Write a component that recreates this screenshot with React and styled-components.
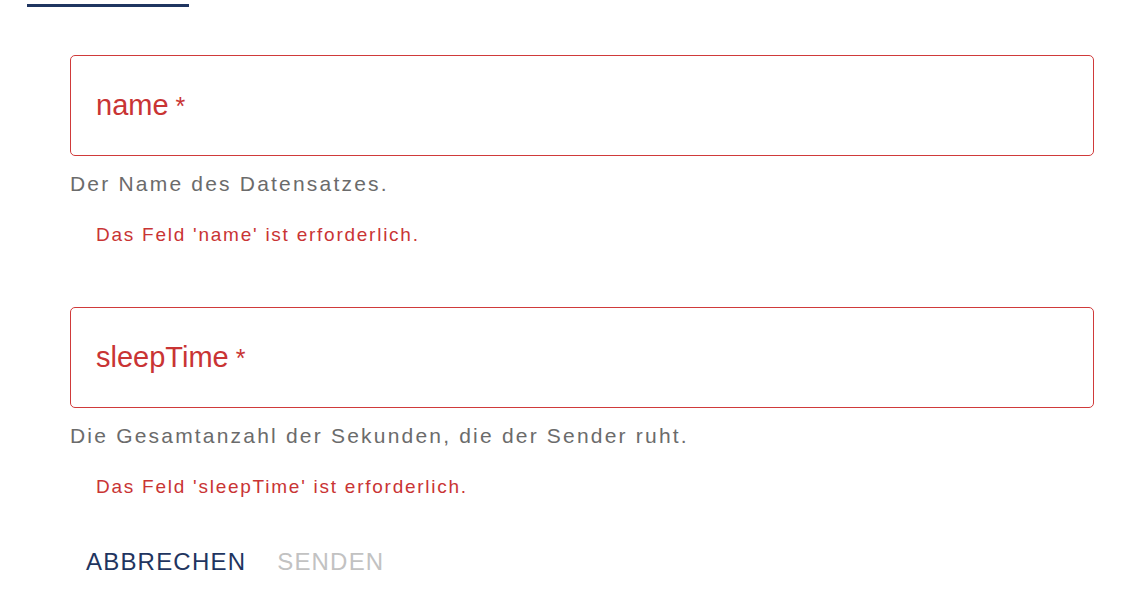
import React from "react";
import styled, { createGlobalStyle } from "styled-components";

const GlobalStyle = createGlobalStyle`
  body {
    margin: 0;
    background: #ffffff;
    font-family: "Liberation Sans", Arial, sans-serif;
  }
`;

const Page = styled.div`
  width: 1134px;
  height: 609px;
  overflow: hidden;
`;

const TabIndicator = styled.div`
  margin-left: 27px;
  margin-top: 4px;
  width: 162px;
  height: 3px;
  background: #1f3560;
`;

const Form = styled.form`
  padding: 48px 40px 0 70px;
  display: flex;
  flex-direction: column;
`;

const Field = styled.div`
  display: flex;
  flex-direction: column;
  margin-bottom: 61px;
`;

const InputBox = styled.div`
  height: 99px;
  border: 1px solid #d03a3a;
  border-radius: 5px;
  display: flex;
  align-items: center;
  padding-left: 25px;
`;

const Label = styled.span`
  color: #c93434;
  font-size: 29px;
`;

const Required = styled.span`
  margin-left: 7px;
  font-size: 25px;
`;

const Helper = styled.div`
  color: #6b6b6b;
  font-size: 21px;
  letter-spacing: 2.2px;
  margin-top: 16px;
`;

const ErrorText = styled.div`
  color: #c93434;
  font-size: 19px;
  letter-spacing: 1.75px;
  margin-top: 28px;
  padding-left: 26px;
`;

const Actions = styled.div`
  display: flex;
  gap: 31px;
  padding-left: 16px;
  margin-top: -11px;
`;

const Button = styled.button`
  background: none;
  border: none;
  padding: 0;
  font-family: inherit;
  font-size: 24px;
  letter-spacing: 1.2px;
  color: ${(p) => (p.disabled ? "#c2c2c2" : "#1f3560")};
  cursor: ${(p) => (p.disabled ? "default" : "pointer")};
`;

const fields = [
  { name: "name", help: "Der Name des Datensatzes." },
  { name: "sleepTime", help: "Die Gesamtanzahl der Sekunden, die der Sender ruht." },
];

export default function App() {
  return (
    <Page>
      <GlobalStyle />
      <TabIndicator />
      <Form onSubmit={(e) => e.preventDefault()}>
        {fields.map((f) => (
          <Field key={f.name}>
            <InputBox>
              <Label>
                {f.name}
                <Required>*</Required>
              </Label>
            </InputBox>
            <Helper>{f.help}</Helper>
            <ErrorText>Das Feld '{f.name}' ist erforderlich.</ErrorText>
          </Field>
        ))}
        <Actions>
          <Button type="button">ABBRECHEN</Button>
          <Button type="submit" disabled>
            SENDEN
          </Button>
        </Actions>
      </Form>
    </Page>
  );
}
